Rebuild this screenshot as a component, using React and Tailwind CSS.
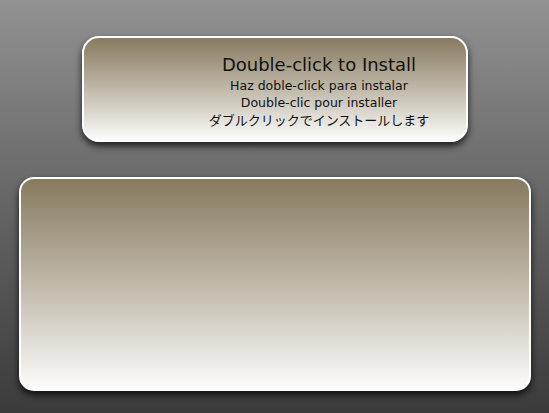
import React from 'react';

export default function App() {
  return (
    <div className="w-[549px] h-[413px] overflow-hidden bg-gradient-to-b from-[#929292] to-[#3b3b3b] flex flex-col font-['DejaVu_Sans','Noto_Sans_CJK_JP',sans-serif]">
      {/* Install hint panel */}
      <div className="ml-[82px] mt-[36px] w-[386px] h-[106px] rounded-[17px] border-2 border-white bg-gradient-to-b from-[#877a5f] to-[#fcfcfb] shadow-[0_4px_7px_rgba(0,0,0,0.75)] flex pl-[88px]">
        <div className="flex-1 flex flex-col items-center pt-[16px] text-[#111]">
          <div className="text-[18px] leading-[22px]">Double-click to Install</div>
          <div className="text-[12.5px] leading-[17px] mt-[1px]">Haz doble-click para instalar</div>
          <div className="text-[12.5px] leading-[17px]">Double-clic pour installer</div>
          <div className="text-[13px] leading-[17px] font-['Noto_Sans_CJK_JP',sans-serif]">ダブルクリックでインストールします</div>
        </div>
      </div>

      {/* Drop area panel */}
      <div className="ml-[19px] mt-[35px] w-[512px] h-[214px] rounded-[15px] border-2 border-white bg-gradient-to-b from-[#877a5f] to-[#fcfcfb] shadow-[0_4px_7px_rgba(0,0,0,0.75)]" />
    </div>
  );
}
